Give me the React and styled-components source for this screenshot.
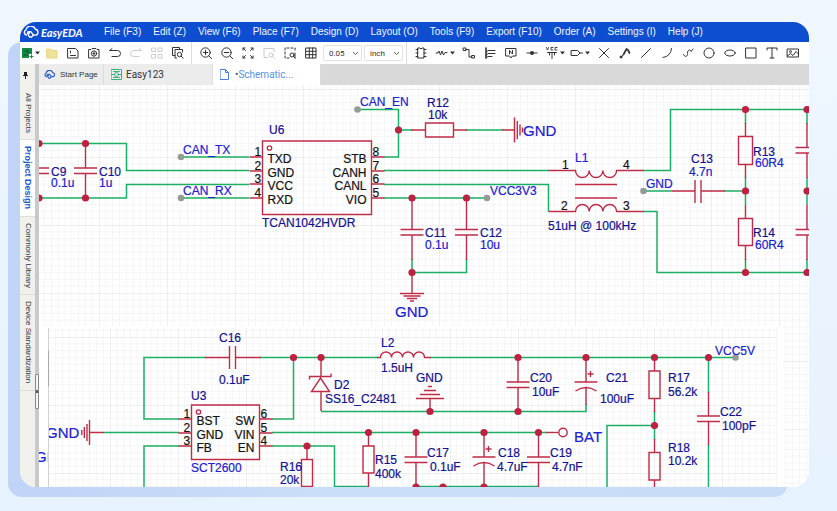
import React from 'react';
import styled, { createGlobalStyle } from 'styled-components';

const GlobalStyle = createGlobalStyle`
  *, *::before, *::after { box-sizing: border-box; }
  body { margin: 0; font-family: "Liberation Sans", Arial, sans-serif; }
  button, select { font: inherit; color: inherit; }
`;

const Page = styled.main`
  display: grid;
  min-height: 100vh;
  background: linear-gradient(to bottom, #f0f7fe, #eaf4fe 50%, #e6f2fd);
`;

const Backdrop = styled.div`
  grid-area: 1 / 1;
  margin: 42px 49px 14px 8px;
  border-radius: 14px;
  background: linear-gradient(to right, #bfd4f7, #cbdef8 40%, #c6dcf7);
`;

const Window = styled.section`
  grid-area: 1 / 1;
  display: flex;
  flex-direction: column;
  min-width: 0;
  margin: 22px 28px 24px 20px;
  border-radius: 16px;
  overflow: hidden;
  background: #fff;
`;

const MenuBar = styled.nav`
  display: flex;
  align-items: center;
  gap: 12px;
  height: 20px;
  flex: none;
  padding-left: 3px;
  background: #0d4dcf;
  color: #f2f6ff;
`;

const Brand = styled.a`
  display: flex;
  align-items: center;
  gap: 1px;
  width: 69px;
  color: #fff;
  font: italic 700 11px Lato, sans-serif;
  text-decoration: none;
`;

const MenuButton = styled.button`
  padding: 0;
  border: 0;
  background: none;
  font-size: 10px;
  line-height: 18px;
  white-space: nowrap;
  cursor: pointer;
`;

const ToolBar = styled.div`
  display: flex;
  align-items: center;
  height: 22px;
  flex: none;
  overflow: hidden;
  background: #fff;
  color: #333;
`;

const ToolButton = styled.button`
  display: flex;
  align-items: center;
  justify-content: center;
  gap: 1px;
  flex: none;
  width: ${(p) => p.$width || 21}px;
  height: 22px;
  padding: 0;
  border: 0;
  background: none;
  opacity: ${(p) => (p.$faded ? 0.25 : 1)};
  cursor: pointer;
`;

const ToolDivider = styled.span`
  flex: none;
  width: 1px;
  height: 22px;
  margin: 0 ${(p) => p.$gap}px;
  background: #dcdcdc;
`;

const SelectBox = styled.label`
  display: grid;
  align-items: center;
  flex: none;
  width: 39px;
  height: 16px;
  margin-left: 2px;
  border: 1px solid #e2e2e2;
  border-radius: 2px;
  svg { grid-area: 1 / 1; justify-self: end; margin-right: 2px; pointer-events: none; }
`;

const Select = styled.select`
  grid-area: 1 / 1;
  appearance: none;
  width: 100%;
  height: 14px;
  padding: 0 9px 0 5px;
  border: 0;
  background: none;
  font: 8px Roboto, sans-serif;
`;

const Body = styled.div`
  display: flex;
  flex: 1;
  min-height: 0;
`;

const SideBar = styled.aside`
  display: flex;
  flex-direction: column;
  flex: none;
  width: 15px;
  background: #f0f0ed;
`;

const PinButton = styled.button`
  display: grid;
  place-items: center;
  height: 23px;
  padding: 0 4px 0 0;
  border: 0;
  background: none;
`;

const SideTab = styled.button`
  width: 15px;
  height: ${(p) => p.$height}px;
  padding: 0;
  border: 0;
  border-bottom: 1px solid #dedede;
  writing-mode: vertical-rl;
  text-align: center;
  white-space: nowrap;
  line-height: 12px;
  font-size: ${(p) => (p.$active ? 9 : 8)}px;
  font-weight: ${(p) => (p.$active ? 700 : 400)};
  color: ${(p) => (p.$active ? '#1c57cc' : '#333')};
  background: ${(p) => (p.$active ? '#fff' : 'none')};
  cursor: pointer;
`;

const Splitter = styled.div`
  display: flex;
  flex-direction: column;
  flex: none;
  width: 4px;
  background: #c9c9c9;
  &::before { content: ''; flex: 4; }
  &::after { content: ''; flex: 1; }
`;

const SplitHandle = styled.button`
  display: grid;
  place-items: center;
  height: 35px;
  padding: 0;
  border: 1px solid #888;
  border-radius: 1px;
  background: #f4f4f4;
  &::before { content: ''; width: 2px; height: 3px; background: #555; }
`;

const Workspace = styled.div`
  display: flex;
  flex-direction: column;
  flex: 1;
  min-width: 0;
`;

const TabStrip = styled.div`
  display: flex;
  height: 21px;
  flex: none;
  background: #d9d9d9;
`;

const FileTab = styled.button`
  display: flex;
  align-items: center;
  gap: ${(p) => p.$gap || 4}px;
  width: ${(p) => p.$width}px;
  padding: 0 0 0 ${(p) => p.$inset || 6}px;
  border: 0;
  border-right: 1px solid #dcdcdc;
  background: ${(p) => (p.$active ? '#fff' : '#ececec')};
  color: ${(p) => (p.$active ? '#5a90e6' : '#333')};
  font-family: ${(p) => (p.$plain ? '"Liberation Sans", sans-serif' : 'Roboto, sans-serif')};
  font-size: ${(p) => (p.$plain ? 8 : 10)}px;
  white-space: nowrap;
  cursor: pointer;
`;

const Dirty = styled.span`
  color: #456;
`;

const Canvas = styled.svg`
  flex: 1;
  width: 100%;
  min-height: 402px;
  display: block;
  background: #fff;
`;

const Label = styled.text`
  font-family: "Liberation Sans", Arial, sans-serif;
  font-size: ${(p) => (p.$big ? 15 : 12)}px;
  fill: ${(p) => p.$color};
  stroke: ${(p) => p.$color};
  stroke-width: 0.2;
  text-anchor: ${(p) => (p.$end ? 'end' : 'start')};
`;

/* ---------- icons ---------- */

const Icon = ({ children, w = 14, h = 14, sw = 1, color = 'currentColor' }) => (
  <svg width={w} height={h} viewBox={`0 0 ${w} ${h}`} fill="none" stroke={color} strokeWidth={sw} strokeLinecap="round" strokeLinejoin="round" aria-hidden="true">
    {children}
  </svg>
);

const Cloud = ({ w, h, color, sw }) => (
  <svg width={w} height={h} viewBox="0 0 17 12" fill="none" stroke={color} strokeWidth={sw} strokeLinecap="round" strokeLinejoin="round" aria-hidden="true">
    <path d="M3.4 9A2.7 2.7 0 0 1 3 3.9 4.9 4.9 0 0 1 12.4 3.3 3 3 0 0 1 13 9.1H10.500L8 5.800H6.500" />
    <path d="M10.500 9.100 8.500 11H6.500L5.300 8.800" />
    <circle cx="5.400" cy="6.800" r="1" />
  </svg>
);

const Caret = () => (
  <svg width="5" height="4" viewBox="0 0 5 4" aria-hidden="true"><path d="M0 0.5h5L2.5 3.5z" fill="#333" /></svg>
);

const Chevron = () => (
  <svg width="7" height="5" viewBox="0 0 7 5" fill="none" stroke="#666" aria-hidden="true"><path d="M1 1l2.5 2.5L6 1" /></svg>
);

const drawings = {
  folder: <path d="M2 3h4l1 1.5h5V12H2z" fill="#f0e296" stroke="#e6d684" />,
  save: <><path d="M2 2.5h7.5L12 5v7H2z" /><path d="M4.500 9.500h5M4.500 5v2" /></>,
  history: <><path d="M2 3.5h2l1-1h4l1 1h2V12H2z" /><circle cx="7" cy="7.5" r="2.7" /><path d="M7 6v3M6 7.5h2" /></>,
  undo: <path d="M4 2.500 1.500 4.500h8a3 3 0 0 1 0 6H4" />,
  redo: <path d="M10 2.500 12.500 4.500h-8a3 3 0 0 0 0 6H10" />,
  tiles: <path d="M2 2h3.5v3.5H2zM8.5 2H12v3.5H8.5zM2 8.5h3.5V12H2zM8.5 8.5H12V12H8.5z" />,
  find: <><path d="M4 9.5H1.5V1.5h7V3M5.5 12H4V3.5h7.5V6" /><circle cx="8.5" cy="8.5" r="2.2" /><path d="m10.2 10.2 2 2" /></>,
  zoomIn: <><circle cx="6.5" cy="6.5" r="4.7" /><path d="m10 10 2.7 2.7M4.3 6.5h4.4M6.5 4.3v4.4" /></>,
  zoomOut: <><circle cx="6.5" cy="6.5" r="4.7" /><path d="m10 10 2.7 2.7M4.3 6.5h4.4" /></>,
  fit: <path d="M2 4V2h2M2 2l2.500 2.500M10 2h2v2M12 2 9.500 4.500M2 10v2h2M2 12l2.500-2.500M12 10v2h-2M12 12 9.500 9.500" />,
  zoomSel: <><path d="M6 11.5H2v-9h10V6" /><circle cx="9" cy="9" r="2" /><path d="m10.5 10.5 1.5 1.5" /></>,
  zoomArea: <><path d="M6 12H2V2h10v4" strokeDasharray="2 2" /><circle cx="9" cy="9" r="2" /><path d="m10.5 10.5 1.5 1.5M12 7v5" /></>,
  grid: <path d="M2 2h10v10H2zM2 5.3h10M2 8.7h10M5.3 2v10M8.7 2v10" />,
  chip: <path d="M4 2h2l1 1 1-1h2v10H4zM2 3.5h2M2 7h2M2 10.5h2M10 3.5h2M10 7h2M10 10.5h2" />,
  resistor: <path d="M1 7h2l1-2 1.5 4L7 5l1.5 4L10 6.5h2" />,
  wire: <path d="M1.500 2H4v2.500H1.500zM10 9.500h2.500V12H10zM4 3.500h3v7.500h3" />,
  bus: <><path d="M3 2v10" strokeWidth="1.6" /><path d="M3 6.500 5 4.500h7M3 9.500l2-2h7M3 12l2-1.500h4" /></>,
  netLabel: <><path d="M2 2.5h10V10H8.5L7 12l-1.500-2H2z" /><path d="M5.5 8V4.5l3 3.500V4.5" /></>,
  junction: <><path d="M2 7h10" /><circle cx="7" cy="7" r="2" fill="currentColor" stroke="none" /></>,
  power: <><path d="M1.500 1.500l1 2.500 1-2.500M8 1.500H6V4h2M12 1.500h-2V4h2" strokeWidth="0.9" /><path d="M2.500 6.500h9M7 6.500V12.500M4.500 6.500V9M9.500 6.500V9" /></>,
  port: <path d="M1.5 4.5h6L10 7 7.5 9.5h-6zM10 7h2.5" />,
  cross: <path d="m2.5 2.5 9 9M11.5 2.5l-9 9" />,
  probe: <><path d="m5.5 8.5 3-5.500 1.500 1 1.500 3" strokeWidth="1.7" /><path d="m2.5 11.5 3-3" /><circle cx="3" cy="11" r="1" fill="currentColor" /></>,
  line: <path d="m2.5 11.5 9-9" />,
  arc: <path d="M11.5 2.5A9 9 0 0 1 3 11.5" />,
  curve: <path d="M2.5 8.500c1.500 3 4 2.500 4-1S9 2.500 10 5.500l2-2.500" />,
  circle: <circle cx="7" cy="7" r="5" />,
  ellipse: <ellipse cx="7" cy="7" rx="5.2" ry="3" />,
  rect: <path d="M2 2h10v10H2z" />,
  text: <path d="M2 4V2h10v2M7 2v10M5 12h4" />,
  image: <><path d="M1.5 3h11v8h-11z" /><circle cx="4.5" cy="5.5" r="1" /><path d="m1.5 10 3-2.500L7 9.500l3-4 2.500 2.500" /></>,
};

const Tool = ({ name, label, faded, caret, width }) => (
  <ToolButton type="button" aria-label={label || name} title={label || name} $faded={faded} $width={width}>
    <Icon>{drawings[name]}</Icon>
    {caret && <Caret />}
  </ToolButton>
);

/* ---------- schematic symbols ---------- */

const RED = '#bf2c48';
const GREEN = '#1bb063';
const NAVY = '#12128f';
const BLUE = '#2020cf';
const BLACK = '#111';

const Wire = ({ d }) => <path d={d} fill="none" stroke={GREEN} strokeWidth="1.5" />;
const Lead = ({ d }) => <path d={d} fill="none" stroke={RED} strokeWidth="1.4" />;
const Dot = ({ x, y }) => <circle cx={x} cy={y} r="3.6" fill="#bd213f" />;
const Port = ({ x, y }) => <circle cx={x} cy={y} r="3.3" fill="#949c94" />;
const T = ({ x, y, c = NAVY, big, end, children }) => (
  <Label x={x} y={y} $color={c} $big={big} $end={end}>{children}</Label>
);

const Capacitor = ({ x, top, y, bottom }) => (
  <Lead d={`M${x} ${top}V${y}M${x - 11.5} ${y}h23M${x - 11.5} ${y + 5.5}h23M${x} ${y + 5.5}V${bottom}`} />
);
const PolarCapacitor = ({ x, top, y, bottom }) => (
  <Lead d={`M${x} ${top}V${y}M${x - 11.5} ${y}h23M${x - 10.5} ${y + 9}q10.5 -7 21 0M${x} ${y + 5.5}V${bottom}M${x + 1.5} ${y - 8}h6M${x + 4.5} ${y - 11}v6`} />
);
const Resistor = ({ x, top, y, h, w, bottom }) => (
  <Lead d={`M${x} ${top}V${y}M${x - w / 2} ${y}h${w}v${h}h${-w}zM${x} ${y + h}V${bottom}`} />
);

const dots = [
  [39, 143.5], [85.5, 143.5], [39, 198], [85.5, 198], [398.5, 130], [412, 198], [466.5, 198], [412, 272.5],
  [745.5, 109.5], [745.5, 191], [745.5, 272.5], [807, 109.5], [807, 191], [807, 272.5],
  [293.5, 357.5], [321, 357.5], [518, 357.5], [586, 357.5], [654.5, 357.5], [708.5, 357.5],
  [430, 411.5], [518, 411.5], [654.5, 425.5], [368.5, 432.5], [416, 432.5], [484, 432.5], [538.5, 432.5],
  [307, 446], [416, 487], [443, 487], [484, 487],
];
const ports = [[181, 157], [181, 198], [357.5, 109.5], [487, 198], [643.5, 191], [735.5, 357.5]];

const labels = [
  [51, 176, 'C9'], [51, 187, '0.1u', BLUE], [99, 176, 'C10'], [99, 187, '1u', BLUE],
  [183, 154, 'CAN_TX', BLUE], [183, 195, 'CAN_RX', BLUE], [360, 106, 'CAN_EN', BLUE],
  [269, 134, 'U6'], [262, 227, 'TCAN1042HVDR'], [427, 107, 'R12'], [428, 119, '10k'],
  [425, 237, 'C11'], [425, 249, '0.1u', BLUE], [480, 237, 'C12'], [480, 249, '10u', BLUE],
  [490, 195, 'VCC3V3', BLUE], [575, 162, 'L1', BLUE], [548, 230, '51uH @ 100kHz'],
  [646, 188, 'GND', BLUE], [691, 163, 'C13'], [689, 176, '4.7n', BLUE],
  [753, 156, 'R13'], [755, 167, '60R4', BLUE], [753, 237, 'R14'], [755, 249, '60R4', BLUE],
  [219, 342, 'C16'], [219, 384, '0.1uF'], [191, 400, 'U3'], [191, 472, 'SCT2600', BLUE],
  [334, 389, 'D2'], [325, 403, 'SS16_C2481'], [381, 347, 'L2'], [381, 372, '1.5uH'], [416, 382, 'GND'],
  [280, 471, 'R16'], [280, 484, '20k'], [375, 464, 'R15'], [375, 478, '400k'],
  [427, 457, 'C17'], [430, 471, '0.1uF'], [498, 457, 'C18'], [497, 471, '4.7uF'],
  [550, 457, 'C19'], [552, 471, '4.7nF'], [530, 382, 'C20'], [532, 396, '10uF'],
  [606, 382, 'C21'], [600, 403, '100uF'], [715, 355, 'VCC5V', BLUE],
  [668, 382, 'R17'], [668, 396, '56.2k'], [668, 452, 'R18'], [668, 465, '10.2k'],
  [720, 416, 'C22'], [722, 430, '100pF'],
];

const Chip = ({ x, y, w, h, left, right, leftNums, rightNums, pinTop }) => (
  <g>
    <Lead d={`M${x} ${y}h${w}v${h}h${-w}z`} />
    <circle cx={x + 7} cy={y + 7} r="2.2" fill="none" stroke={RED} strokeWidth="1.3" />
    {left.map((name, i) => {
      const py = pinTop + Math.round(i * 13.6);
      return (
        <g key={name}>
          <Lead d={`M${x - 13} ${py}H${x}M${x + w} ${py}h13`} />
          <T x={x - 8} y={py - 1} c={BLACK}>{leftNums[i]}</T>
          <T x={x + w + 1} y={py - 1} c={BLACK}>{rightNums[i]}</T>
          <T x={x + 5} y={py + 6} c={BLACK}>{name}</T>
          <T x={x + w - 5} y={py + 6} c={BLACK} end>{right[i]}</T>
        </g>
      );
    })}
  </g>
);

const GridPattern = ({ id, x, y }) => (
  <pattern id={id} x={x} y={y} width="68" height="68" patternUnits="userSpaceOnUse">
    {[6.8, 13.6, 20.4, 27.2, 34, 40.8, 47.6, 54.4, 61.2].map((p) => (
      <path key={p} d={`M${p} 0V68M0 ${p}H68`} stroke="#f5f5f5" strokeWidth="1" />
    ))}
    <path d="M0.5 0V68M0 0.5H68" stroke="#eeeeee" strokeWidth="1" />
  </pattern>
);

const Schematic = () => (
  <Canvas role="img" aria-label="Circuit schematic">
    <defs>
      <GridPattern id="gridUpper" x="31" y="21" />
      <GridPattern id="gridLower" x="42" y="65" />
      <clipPath id="lowerSheet"><rect x="49" y="326" width="740" height="400" /></clipPath>
      <clipPath id="edgeSheet"><rect x="38" y="326" width="10" height="400" /></clipPath>
    </defs>
    <g transform="translate(-39 -85)">
      <rect x="39" y="85" width="100%" height="100%" fill="url(#gridUpper)" />
      <rect x="39" y="326" width="744" height="100%" fill="#fff" />
      <rect x="49" y="328" width="729" height="100%" fill="url(#gridLower)" />
      <path d="M48.5 328V900" stroke="#d2d2d2" />
      <path d="M48.5 351V386" stroke="#a8a8a8" />

      <Wire d="M39 143.5H126.5V170.5H249M39 198H126.5V184.5H249M181 157H249M181 198H249" />
      <Wire d="M384 157H398.5V109.5H357.5M398.5 130H412M466 130H503M384 170.5H549M384 184.5H548.5V211.5M384 198H487" />
      <Wire d="M644 170.5H670.5V109.5H807M644 211.5H657V272.5H807M643.5 191H672M724 191H745.5" />
      <Wire d="M745.5 109.5V124M745.5 177V205M745.5 259V272.5M807 109.5V124M807 177V205M807 259V272.5" />
      <Wire d="M412 259V272.5H466.5V259" />
      <Wire d="M179 419H144V357.5H206M260 357.5H378M430 357.5H735.5M272 419H293.5V357.5M104 432.5H179M272 432.5H547" />
      <Wire d="M179 446H144V900M272 446H334.5V486.5H368.5M416 486.5H538.5M321 411.5H586V404M654.5 411V440M654.5 425.5H607V900M708.5 357.5V393M708.5 444V900" />

      <Capacitor x={85.5} top={143.5} y={168} bottom={198} />
      <Lead d="M39 168H49M39 173.5H49" />
      <Capacitor x={412} top={198} y={229.5} bottom={260} />
      <Capacitor x={466.5} top={198} y={229.5} bottom={260} />
      <Lead d="M412 272.5V293.5M400 293.5h24M403.5 296h17M407 298.5h10M410 301h4" />
      <Lead d="M411 130H425.5M425.5 123h28v14h-28zM453.5 130H467M502 130H514.5M514.5 117.5v25M517.3 121v18M520 124.5v11M522.5 127.5v5" />
      <Lead d="M548.5 170.5H575.5a6.85 7 0 0 0 13.7 0a6.85 7 0 0 0 13.7 0a6.85 7 0 0 0 13.7 0H644" />
      <Lead d="M548.5 211.5H575.5a6.85 7 0 0 1 13.7 0a6.85 7 0 0 1 13.7 0a6.85 7 0 0 1 13.7 0H644M575 184.5h42M575 198h42" />
      <Lead d="M672 191H695M695 180v23M701 180v23M701 191H725" />
      <Resistor x={745.5} top={123} y={136.5} w={14} h={28} bottom={178} />
      <Resistor x={745.5} top={205} y={218.5} w={14} h={27} bottom={260} />
      <Capacitor x={807} top={123} y={147.5} bottom={178} />
      <Capacitor x={807} top={205} y={229.5} bottom={260} />

      <Lead d="M205 357.5H229.5M229.5 346v23M235.5 346v23M235.5 357.5H261" />
      <Lead d="M377 357.5h3.5a5.5 5.5 0 0 1 11 0a5.5 5.5 0 0 1 11 0a5.5 5.5 0 0 1 11 0a5.5 5.5 0 0 1 11 0H431" />
      <Lead d="M321 357.5V376.5M309.5 379.5V376.5H331V373.5M320.5 378l9 13.5h-18zM321 391.5V411" />
      <Lead d="M430 411.5V398.5M416 398.5h28M420 394.5h20M424 390.5h12M428 386.5h4" />
      <Lead d="M104 432.5H89.5M89.5 420v25M87 424v17M84.3 427v11M81.8 430v5" />
      <Capacitor x={518} top={357.5} y={382} bottom={411} />
      <PolarCapacitor x={586} top={357.5} y={382} bottom={405} />
      <Capacitor x={416} top={432.5} y={457} bottom={487} />
      <PolarCapacitor x={484} top={432.5} y={457} bottom={487} />
      <Capacitor x={538.5} top={432.5} y={457} bottom={487} />
      <Capacitor x={708.5} top={392} y={416} bottom={445} />
      <Resistor x={307} top={446} y={459.5} w={11} h={27} bottom={500} />
      <Resistor x={368.5} top={432.5} y={446} w={11} h={27} bottom={487} />
      <Resistor x={654.5} top={357.5} y={371} w={11} h={27.5} bottom={412} />
      <Resistor x={654.5} top={439} y={452.5} w={11} h={27.5} bottom={494} />
      <Lead d="M546 432.5H558.5" />
      <circle cx="563" cy="432.5" r="4.2" fill="#fff" stroke={RED} strokeWidth="1.4" />

      {ports.map(([x, y]) => <Port key={`${x}-${y}`} x={x} y={y} />)}
      {dots.map(([x, y]) => <Dot key={`${x}-${y}`} x={x} y={y} />)}

      <Chip x={262.5} y={141} w={109} h={73.5} pinTop={157}
        left={['TXD', 'GND', 'VCC', 'RXD']} right={['STB', 'CANH', 'CANL', 'VIO']}
        leftNums={[1, 2, 3, 4]} rightNums={[8, 7, 6, 5]} />
      <Chip x={191.5} y={405} w={68} h={54.5} pinTop={419}
        left={['BST', 'GND', 'FB']} right={['SW', 'VIN', 'EN']}
        leftNums={[1, 2, 3]} rightNums={[6, 5, 4]} />

      {labels.map(([x, y, s, c]) => <T key={`${x}-${y}`} x={x} y={y} c={c}>{s}</T>)}
      <T x={562} y={169} c={BLACK}>1</T>
      <T x={623} y={169} c={BLACK}>4</T>
      <T x={561} y={210} c={BLACK}>2</T>
      <T x={623} y={210} c={BLACK}>3</T>
      <T x={523} y={136} c={BLUE} big>GND</T>
      <T x={395} y={317} c={BLUE} big>GND</T>
      <T x={574} y={442} c={BLUE} big>BAT</T>
      <g clipPath="url(#lowerSheet)"><T x={46} y={438} c={BLUE} big>GND</T></g>
      <g clipPath="url(#edgeSheet)"><T x={35} y={462} c={BLUE} big>GND</T></g>
    </g>
  </Canvas>
);

/* ---------- page ---------- */

const menus = ['File (F3)', 'Edit (Z)', 'View (F6)', 'Place (F7)', 'Design (D)', 'Layout (O)', 'Tools (F9)', 'Export (F10)', 'Order (A)', 'Settings (I)', 'Help (J)'];

export default function App() {
  return (
    <Page>
      <GlobalStyle />
      <Backdrop />
      <Window>
        <MenuBar aria-label="Main menu">
          <Brand href="#home"><Cloud w={17} h={12} color="#fff" sw={1.4} />EasyEDA</Brand>
          {menus.map((m) => <MenuButton type="button" key={m}>{m}</MenuButton>)}
        </MenuBar>

        <ToolBar role="toolbar" aria-label="Drawing tools">
          <ToolButton type="button" aria-label="New" $width={21}>
            <Icon w={12} h={12}>
              <path d="M0 1h10v6H7v4H0z" fill="#128a45" stroke="none" />
              <path d="M2 4h3M6 3v3M2 8h3" stroke="#0a4f28" />
              <path d="M9.5 8v3M8 9.5h3" stroke="#128a45" />
            </Icon>
            <Caret />
          </ToolButton>
          <Tool name="folder" label="Open" />
          <Tool name="save" label="Save" />
          <Tool name="history" label="History" />
          <Tool name="undo" label="Undo" />
          <Tool name="redo" label="Redo" faded />
          <Tool name="tiles" label="Align" faded />
          <Tool name="find" label="Find" />
          <ToolDivider $gap={3} />
          <Tool name="zoomIn" label="Zoom in" />
          <Tool name="zoomOut" label="Zoom out" />
          <Tool name="fit" label="Fit" />
          <Tool name="zoomSel" label="Zoom selection" faded />
          <Tool name="zoomArea" label="Zoom area" />
          <Tool name="grid" label="Grid" />
          <SelectBox>
            <Select aria-label="Grid size" defaultValue="0.05"><option>0.05</option><option>0.1</option></Select>
            <Chevron />
          </SelectBox>
          <SelectBox>
            <Select aria-label="Unit" defaultValue="inch"><option>inch</option><option>mm</option></Select>
            <Chevron />
          </SelectBox>
          <ToolDivider $gap={3} />
          <Tool name="chip" label="Component" />
          <Tool name="resistor" label="Resistor" caret width={27} />
          <Tool name="wire" label="Wire" />
          <Tool name="bus" label="Bus" />
          <Tool name="netLabel" label="Net label" />
          <Tool name="junction" label="Junction" />
          <Tool name="power" label="Power" caret width={25} />
          <Tool name="port" label="Port" caret width={26} />
          <Tool name="cross" label="No connect" />
          <Tool name="probe" label="Probe" />
          <Tool name="line" label="Line" />
          <Tool name="arc" label="Arc" />
          <Tool name="curve" label="Curve" />
          <Tool name="circle" label="Circle" />
          <Tool name="ellipse" label="Ellipse" />
          <Tool name="rect" label="Rectangle" />
          <Tool name="text" label="Text" />
          <Tool name="image" label="Image" />
        </ToolBar>

        <Body>
          <SideBar>
            <PinButton type="button" aria-label="Pin panel">
              <svg width="5" height="7" viewBox="0 0 5 7" aria-hidden="true"><path d="M1 0h3v3h1v1H3v3H2V4H0V3h1z" fill="#222" /></svg>
            </PinButton>
            <SideTab type="button" $height={53}>All Projects</SideTab>
            <SideTab type="button" $height={77} $active>Project Design</SideTab>
            <SideTab type="button" $height={78}>Commonly Library</SideTab>
            <SideTab type="button" $height={96}>Device Standardization</SideTab>
          </SideBar>
          <Splitter><SplitHandle type="button" aria-label="Collapse panel" /></Splitter>
          <Workspace>
            <TabStrip>
              <FileTab type="button" $width={65} $inset={5} $plain><Cloud w={12} h={9} color="#2b62c4" sw={1.7} />Start Page</FileTab>
              <FileTab type="button" $width={109} $inset={7} $gap={4}>
                <Icon w={11} h={11} color="#36b37e"><path d="M.5.5h10v10H.5z" /><circle cx="5.5" cy="5.5" r="2" /><path d="M.5 5.5h3M7.5 5.5h3M2.5 2.5h6M2.5 8.5h6" /></Icon>
                Easy123
              </FileTab>
              <FileTab type="button" $width={108} $inset={7} $gap={6} $active>
                <Icon w={9} h={11} color="#4a7fe0"><path d="M.5.5h5L8.5 3.5v7H.5zM5.5.5v3h3" /></Icon>
                <span><Dirty>•</Dirty>Schematic...</span>
              </FileTab>
            </TabStrip>
            <Schematic />
          </Workspace>
        </Body>
      </Window>
    </Page>
  );
}
